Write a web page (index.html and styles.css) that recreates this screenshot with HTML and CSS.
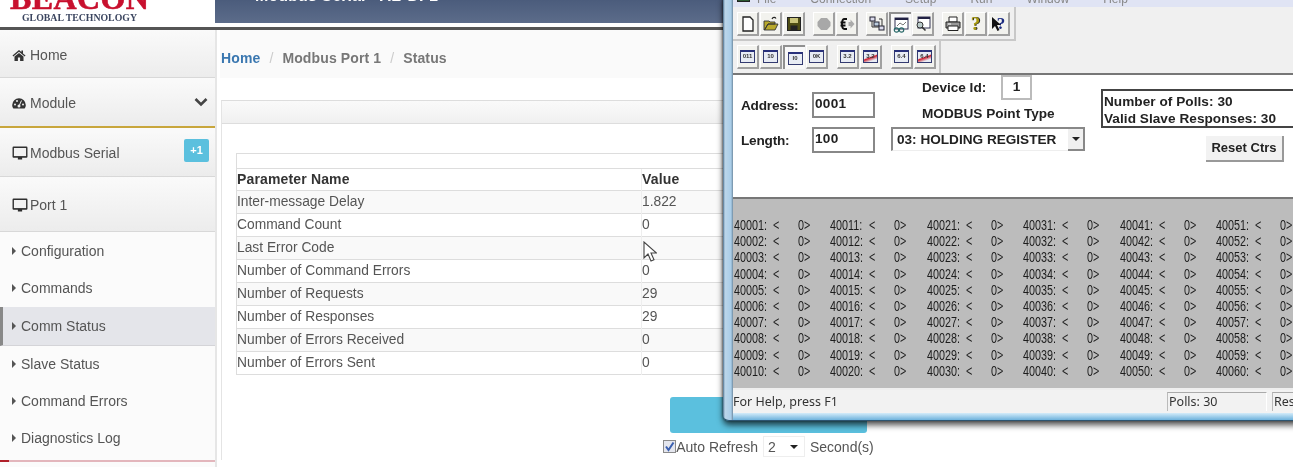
FILE: index.html
```html
<!DOCTYPE html>
<html lang="en">
<head>
<meta charset="utf-8">
<title>Modbus Port 1 Status</title>
<link rel="stylesheet" href="styles.css">
</head>
<body>
<div class="page">
  <header class="top">
    <div class="logo">
      <div class="logo-name">BEACON</div>
      <div class="logo-sub">GLOBAL TECHNOLOGY</div>
    </div>
    <div class="titlebar"><span>Modbus Serial - AB DF1</span></div>
  </header>
  <div class="layout">
    <nav class="side">
      <div class="nav nav-home"><svg class="ico" viewBox="0 0 14 14"><path d="M7 2 0.5 7.6l.8.9L7 3.7l5.7 4.8.8-.9L11 5.500V2.600H9.400v1.500zM2.500 8.600V13h3.400V9.500h2.200V13h3.400V8.600L7 4.900z" fill="#333"/></svg>Home</div>
      <div class="nav nav-mod"><svg class="ico" viewBox="0 0 14 14"><path d="M7 2.200a6.800 6.800 0 0 0-6.800 6.800c0 1.500.5 2.700 1.200 3.500h11.200c.7-.8 1.200-2 1.200-3.500A6.800 6.800 0 0 0 7 2.200z" fill="#333"/><circle cx="3" cy="8.500" r="1" fill="#eee"/><circle cx="5" cy="5" r="1" fill="#eee"/><circle cx="11" cy="8.500" r="1" fill="#eee"/><path d="M9.500 4.500 7.500 9" stroke="#eee" stroke-width="1"/><circle cx="7" cy="10" r="1.500" fill="#eee"/></svg>Module<svg class="chev" viewBox="0 0 14 10"><path d="M1.500 2 7 7.500 12.500 2" fill="none" stroke="#444" stroke-width="2.600"/></svg></div>
      <div class="nav nav-serial"><svg class="ico ico-mon" viewBox="0 0 15 14"><path d="M1.500 1h12a1 1 0 0 1 1 1v8.500a1 1 0 0 1-1 1h-4V13h-4v-1.500h-4a1 1 0 0 1-1-1V2a1 1 0 0 1 1-1z" fill="#2e2e2e"/><rect x="1.800" y="2.300" width="11.400" height="7.600" fill="#f2f2f2"/></svg>Modbus Serial<span class="badge">+1</span></div>
      <div class="nav nav-port"><svg class="ico ico-mon" viewBox="0 0 15 14"><path d="M1.500 1h12a1 1 0 0 1 1 1v8.500a1 1 0 0 1-1 1h-4V13h-4v-1.500h-4a1 1 0 0 1-1-1V2a1 1 0 0 1 1-1z" fill="#2e2e2e"/><rect x="1.800" y="2.300" width="11.400" height="7.600" fill="#f2f2f2"/></svg>Port 1</div>
      <ul class="sub">
        <li class="sub-item"><i class="caret"></i>Configuration</li>
        <li class="sub-item"><i class="caret"></i>Commands</li>
        <li class="sub-item active"><i class="caret"></i>Comm Status</li>
        <li class="sub-item"><i class="caret"></i>Slave Status</li>
        <li class="sub-item"><i class="caret"></i>Command Errors</li>
        <li class="sub-item"><i class="caret"></i>Diagnostics Log</li>
      </ul>
      <div class="side-end"></div>
    </nav>
    <main class="main">
      <div class="crumbs"><a class="crumb-link">Home</a><span class="sep">/</span><span>Modbus Port 1</span><span class="sep">/</span><span>Status</span></div>
      <section class="panel">
        <div class="panel-head"></div>
        <div class="panel-body">
          <table class="params">
            <colgroup><col class="col-name"><col></colgroup>
            <tr class="cap"><td colspan="2"></td></tr>
            <tr class="head"><th>Parameter Name</th><th>Value</th></tr>
            <tr class="odd"><td>Inter-message Delay</td><td>1.822</td></tr>
            <tr><td>Command Count</td><td>0</td></tr>
            <tr class="odd"><td>Last Error Code</td><td></td></tr>
            <tr><td>Number of Command Errors</td><td>0</td></tr>
            <tr class="odd"><td>Number of Requests</td><td>29</td></tr>
            <tr><td>Number of Responses</td><td>29</td></tr>
            <tr class="odd"><td>Number of Errors Received</td><td>0</td></tr>
            <tr><td>Number of Errors Sent</td><td>0</td></tr>
          </table>
          <div class="actions">
            <div class="refresh-btn"></div>
            <div class="auto">
              <svg class="check" viewBox="0 0 13 13"><rect x=".5" y=".5" width="12" height="12" fill="#e4e6ee" stroke="#8a8a8a"/><path d="M3 6.500 5.500 10 10.500 2.500" fill="none" stroke="#3a5fb0" stroke-width="2"/></svg>
              <span>Auto Refresh</span>
              <span class="sel"><span>2</span><i class="sel-arrow"></i></span>
              <span>Second(s)</span>
            </div>
          </div>
        </div>
      </section>
    </main>
  </div>

  <svg class="cursor" viewBox="0 0 14 22"><path d="M1 1v16l4-4 3 7 3-1.300-3-6.700h5.500z" fill="#fff" stroke="#444" stroke-width="1.100"/></svg>

  <div class="win">
    <div class="win-in">
      <div class="menu">
        <span class="app-ico"></span>
        <span>File</span><span>Connection</span><span>Setup</span><span>Run</span><span>Window</span><span>Help</span>
      </div>
      <div class="tb tb1">
        <div class="tb-box">
          <div class="grp">
            <span class="btn"><svg viewBox="0 0 16 16"><path d="M3 1h7l3 3v11H3z" fill="#fff" stroke="#222" stroke-width="1.300"/></svg></span>
            <span class="btn"><svg viewBox="0 0 16 16"><path d="M1 14V5h5l1 1h5v2H5L1.500 14zM1.500 14h10.500l3-6H5z" fill="#b9a92c" stroke="#333" stroke-width=".9"/><path d="M9 3c1-2 3-2 4-.5" fill="none" stroke="#222" stroke-width="1.200"/></svg></span>
            <span class="btn"><svg viewBox="0 0 16 16"><rect x="1.500" y="1.500" width="13" height="13" fill="#4e4d14" stroke="#222"/><rect x="4" y="2" width="8" height="5" fill="#c9c47a"/><rect x="4.500" y="9.500" width="7" height="5" fill="#222"/></svg></span>
          </div>
          <div class="grp">
            <span class="btn"><svg viewBox="0 0 16 16"><path d="M5 2h6l3.500 4v4L11 14H5l-3.500-4V6z" fill="#a8a8a8"/></svg></span>
            <span class="btn"><svg viewBox="0 0 16 16"><path d="M8 3H5.500Q3 3 3 8t2.500 5H8M1.500 6.500H6.500M1.500 9.500H6.500" fill="none" stroke="#111" stroke-width="1.900"/><path d="M9.500 6h2V3.500L15.500 8l-4 4.500V10h-2z" fill="#aaa"/></svg></span>
          </div>
          <div class="grp">
            <span class="btn"><svg viewBox="0 0 16 16"><rect x="1" y="1" width="5" height="4" fill="#dde" stroke="#223"/><rect x="5" y="6" width="5" height="4" fill="#bcd" stroke="#223"/><rect x="10" y="10" width="5" height="4" fill="#dde" stroke="#223"/><path d="M3 5v6h7M10 3h3v7" fill="none" stroke="#333"/></svg></span>
            <span class="btn pressed"><svg viewBox="0 0 16 16"><rect x="2" y="1" width="13" height="11" fill="#fff" stroke="#335"/><rect x="2" y="1" width="13" height="2" fill="#224"/><path d="M4 9 7 6l3 2 3-3" fill="none" stroke="#777"/><circle cx="3.500" cy="13" r="2.200" fill="none" stroke="#2a6a6a" stroke-width="1.200"/><circle cx="8.500" cy="13" r="2.200" fill="none" stroke="#2a6a6a" stroke-width="1.200"/></svg></span>
            <span class="btn"><svg viewBox="0 0 16 16"><rect x="3" y="1" width="12" height="11" fill="#fff" stroke="#335"/><rect x="3" y="1" width="12" height="2" fill="#224"/><circle cx="5" cy="9" r="3" fill="#bcc" stroke="#333"/><path d="M7 11l3.500 3.500" stroke="#333" stroke-width="1.600"/></svg></span>
          </div>
          <div class="grp">
            <span class="btn"><svg viewBox="0 0 16 16"><path d="M4 1h8v5H4z" fill="#fff" stroke="#222"/><path d="M1 6h14v6H1z" fill="#999" stroke="#222"/><path d="M3 10h10v4.500H3z" fill="#fff" stroke="#222"/><path d="M3 8h3" stroke="#fff"/></svg></span>
            <span class="btn"><span class="q q-y">?</span></span>
            <span class="btn"><svg class="ptr" viewBox="0 0 9 14"><path d="M0 0v12l3-3 2.500 5 2-1-2.500-5H9z" fill="#111"/></svg><span class="q q-n">?</span></span>
          </div>
        </div>
      </div>
      <div class="tb tb2">
        <div class="tb-box2">
          <div class="grp">
            <span class="btn"><span class="mini">011</span></span>
            <span class="btn"><span class="mini">10</span></span>
            <span class="btn pressed"><span class="mini">I0</span></span>
            <span class="btn"><span class="mini">0K</span></span>
          </div>
          <div class="grp">
            <span class="btn"><span class="mini">3.2</span></span>
            <span class="btn"><span class="mini mini-red">3.2</span></span>
          </div>
          <div class="grp">
            <span class="btn"><span class="mini">6.4</span></span>
            <span class="btn"><span class="mini mini-red">6.4</span></span>
          </div>
        </div>
      </div>
      <div class="form">
        <div class="f-left">
          <div class="f-row"><label class="f-label">Address:</label><span class="f-input">0001</span></div>
          <div class="f-row"><label class="f-label">Length:</label><span class="f-input">100</span></div>
        </div>
        <div class="f-mid">
          <div class="dev"><label class="dev-label">Device Id:</label><span class="dev-input">1</span></div>
          <div class="pt-label">MODBUS Point Type</div>
          <div class="combo"><span>03: HOLDING REGISTER</span><span class="combo-btn"><i class="sel-arrow"></i></span></div>
        </div>
        <div class="f-right">
          <div class="counts"><div>Number of Polls: 30</div><div>Valid Slave Responses: 30</div></div>
          <div class="reset">Reset Ctrs</div>
        </div>
      </div>
      <div class="regs">
        <div class="reg"><span>40001:</span><span>&lt;</span><span>0&gt;</span></div>
        <div class="reg"><span>40002:</span><span>&lt;</span><span>0&gt;</span></div>
        <div class="reg"><span>40003:</span><span>&lt;</span><span>0&gt;</span></div>
        <div class="reg"><span>40004:</span><span>&lt;</span><span>0&gt;</span></div>
        <div class="reg"><span>40005:</span><span>&lt;</span><span>0&gt;</span></div>
        <div class="reg"><span>40006:</span><span>&lt;</span><span>0&gt;</span></div>
        <div class="reg"><span>40007:</span><span>&lt;</span><span>0&gt;</span></div>
        <div class="reg"><span>40008:</span><span>&lt;</span><span>0&gt;</span></div>
        <div class="reg"><span>40009:</span><span>&lt;</span><span>0&gt;</span></div>
        <div class="reg"><span>40010:</span><span>&lt;</span><span>0&gt;</span></div>
        <div class="reg"><span>40011:</span><span>&lt;</span><span>0&gt;</span></div>
        <div class="reg"><span>40012:</span><span>&lt;</span><span>0&gt;</span></div>
        <div class="reg"><span>40013:</span><span>&lt;</span><span>0&gt;</span></div>
        <div class="reg"><span>40014:</span><span>&lt;</span><span>0&gt;</span></div>
        <div class="reg"><span>40015:</span><span>&lt;</span><span>0&gt;</span></div>
        <div class="reg"><span>40016:</span><span>&lt;</span><span>0&gt;</span></div>
        <div class="reg"><span>40017:</span><span>&lt;</span><span>0&gt;</span></div>
        <div class="reg"><span>40018:</span><span>&lt;</span><span>0&gt;</span></div>
        <div class="reg"><span>40019:</span><span>&lt;</span><span>0&gt;</span></div>
        <div class="reg"><span>40020:</span><span>&lt;</span><span>0&gt;</span></div>
        <div class="reg"><span>40021:</span><span>&lt;</span><span>0&gt;</span></div>
        <div class="reg"><span>40022:</span><span>&lt;</span><span>0&gt;</span></div>
        <div class="reg"><span>40023:</span><span>&lt;</span><span>0&gt;</span></div>
        <div class="reg"><span>40024:</span><span>&lt;</span><span>0&gt;</span></div>
        <div class="reg"><span>40025:</span><span>&lt;</span><span>0&gt;</span></div>
        <div class="reg"><span>40026:</span><span>&lt;</span><span>0&gt;</span></div>
        <div class="reg"><span>40027:</span><span>&lt;</span><span>0&gt;</span></div>
        <div class="reg"><span>40028:</span><span>&lt;</span><span>0&gt;</span></div>
        <div class="reg"><span>40029:</span><span>&lt;</span><span>0&gt;</span></div>
        <div class="reg"><span>40030:</span><span>&lt;</span><span>0&gt;</span></div>
        <div class="reg"><span>40031:</span><span>&lt;</span><span>0&gt;</span></div>
        <div class="reg"><span>40032:</span><span>&lt;</span><span>0&gt;</span></div>
        <div class="reg"><span>40033:</span><span>&lt;</span><span>0&gt;</span></div>
        <div class="reg"><span>40034:</span><span>&lt;</span><span>0&gt;</span></div>
        <div class="reg"><span>40035:</span><span>&lt;</span><span>0&gt;</span></div>
        <div class="reg"><span>40036:</span><span>&lt;</span><span>0&gt;</span></div>
        <div class="reg"><span>40037:</span><span>&lt;</span><span>0&gt;</span></div>
        <div class="reg"><span>40038:</span><span>&lt;</span><span>0&gt;</span></div>
        <div class="reg"><span>40039:</span><span>&lt;</span><span>0&gt;</span></div>
        <div class="reg"><span>40040:</span><span>&lt;</span><span>0&gt;</span></div>
        <div class="reg"><span>40041:</span><span>&lt;</span><span>0&gt;</span></div>
        <div class="reg"><span>40042:</span><span>&lt;</span><span>0&gt;</span></div>
        <div class="reg"><span>40043:</span><span>&lt;</span><span>0&gt;</span></div>
        <div class="reg"><span>40044:</span><span>&lt;</span><span>0&gt;</span></div>
        <div class="reg"><span>40045:</span><span>&lt;</span><span>0&gt;</span></div>
        <div class="reg"><span>40046:</span><span>&lt;</span><span>0&gt;</span></div>
        <div class="reg"><span>40047:</span><span>&lt;</span><span>0&gt;</span></div>
        <div class="reg"><span>40048:</span><span>&lt;</span><span>0&gt;</span></div>
        <div class="reg"><span>40049:</span><span>&lt;</span><span>0&gt;</span></div>
        <div class="reg"><span>40050:</span><span>&lt;</span><span>0&gt;</span></div>
        <div class="reg"><span>40051:</span><span>&lt;</span><span>0&gt;</span></div>
        <div class="reg"><span>40052:</span><span>&lt;</span><span>0&gt;</span></div>
        <div class="reg"><span>40053:</span><span>&lt;</span><span>0&gt;</span></div>
        <div class="reg"><span>40054:</span><span>&lt;</span><span>0&gt;</span></div>
        <div class="reg"><span>40055:</span><span>&lt;</span><span>0&gt;</span></div>
        <div class="reg"><span>40056:</span><span>&lt;</span><span>0&gt;</span></div>
        <div class="reg"><span>40057:</span><span>&lt;</span><span>0&gt;</span></div>
        <div class="reg"><span>40058:</span><span>&lt;</span><span>0&gt;</span></div>
        <div class="reg"><span>40059:</span><span>&lt;</span><span>0&gt;</span></div>
        <div class="reg"><span>40060:</span><span>&lt;</span><span>0&gt;</span></div>
      </div>
      <div class="status">
        <span class="st-help">For Help, press F1</span>
        <span class="st-cell st-polls">Polls: 30</span>
        <span class="st-cell st-res">Resets: 0</span>
      </div>
    </div>
  </div>
</div>
</body>
</html>
```
FILE: styles.css
```css
* { box-sizing: border-box; }
html, body { margin: 0; padding: 0; background: #fff; }
body { font-family: "Liberation Sans", Arial, sans-serif; color: #555; overflow: hidden; }

.page {
  position: relative;
  width: 1293px;
  height: 467px;
  overflow: hidden;
  background: #fff;
  filter: blur(.35px);
}

/* header */
.top {
  display: flex;
  height: 30px;
  border-bottom: 3px solid #555;
}
.logo { width: 215px; height: 27px; overflow: hidden; padding-left: 10px; }
.logo-name {
  font: bold 32px/19px "Liberation Serif", serif;
  color: #c8102e;
  height: 8px;
  display: flex;
  align-items: flex-end;
  letter-spacing: .4px;
  -webkit-text-stroke: .6px #c8102e;
}
.logo-sub {
  font: bold 9.8px/12px "Liberation Serif", serif;
  color: #3c4660;
  margin: 4px 0 0 12px;
  white-space: nowrap;
}
.titlebar {
  flex: 1;
  height: 23px;
  background: linear-gradient(#4b5c7c, #5c6c8a);
  overflow: hidden;
  color: #fff;
  font: bold 16px/16px "Liberation Sans", sans-serif;
  padding-left: 40px;
}
.titlebar span { display: block; margin-top: -12px; white-space: nowrap; letter-spacing: .1px; }

/* layout */
.layout { display: flex; height: 437px; }
.side {
  width: 217px;
  flex: none;
  background: #fbfbfb;
  border-right: 2px solid #e6e6e6;
  font-size: 14px;
  color: #555;
}
.nav {
  display: flex;
  align-items: center;
  padding-left: 12px;
  padding-top: 2px;
  background: linear-gradient(#fafafa, #ececec);
  border-bottom: 1px solid #d8d8d8;
}
.nav-home { height: 48px; }
.nav-mod { height: 50px; border-bottom: 2px solid #c8a63c; padding-right: 7px; }
.nav-serial { height: 49px; padding-right: 6px; }
.nav-port { height: 55px; }
.ico { width: 14px; height: 14px; margin-right: 4px; flex: none; }
.ico-mon { width: 16px; height: 16px; margin-right: 2px; }
.chev { width: 14px; height: 10px; margin-left: auto; margin-top: -2px; }
.badge {
  margin-left: auto;
  margin-top: -6px;
  width: 25px;
  height: 23px;
  background: #5bc0de;
  border-radius: 2px;
  color: #fff;
  font-size: 11px;
  font-weight: bold;
  text-align: center;
  line-height: 23px;
}
.sub { list-style: none; margin: 0; padding: 0; }
.sub-item {
  display: flex;
  align-items: center;
  height: 37.5px;
  padding-left: 12px;
}
.sub-item.active {
  height: 39px;
  background: #e4e5ea;
  border-left: 3px solid #888;
  border-bottom: 1px solid #d4d4d8;
  padding-left: 9px;
}
.active ~ .sub-item { height: 37px; padding-bottom: 2px; }
.caret {
  width: 0; height: 0;
  border-left: 4px solid #555;
  border-top: 4px solid transparent;
  border-bottom: 4px solid transparent;
  margin-right: 5px;
}
.side-end {
  height: 2px;
  margin-top: 3px;
  background: linear-gradient(90deg, #b0202a 9px, #e3b6bc 9px);
}

/* content */
.main { flex: 1; padding-left: 3px; min-width: 0; }
.crumbs {
  height: 48px;
  padding: 8px 0 0 1px;
  display: flex;
  align-items: center;
  gap: 9px;
  background: #fafafa;
  font-size: 14px;
  font-weight: bold;
  color: #777;
  letter-spacing: .12px;
}
.crumb-link { color: #3a77b0; }
.sep { color: #ccc; font-weight: normal; }
.panel {
  width: 1093px;
  margin: 22px 0 0 1px;
  border-top: 1px solid #ddd;
  border-left: 1px solid #e4e4e4;
  font-size: 13.8px;
}
.panel-head {
  height: 23px;
  background: linear-gradient(#fafafa, #f0f0f0);
  border-bottom: 1px solid #ddd;
}
.panel-body { padding: 29px 14px 0 14px; }
.params {
  width: 100%;
  border-collapse: collapse;
  border: 1px solid #ddd;
  table-layout: fixed;
}
.col-name { width: 405px; }
.params td, .params th {
  padding: 0 0 1px 0;
  height: 23px;
  border-top: 1px solid #ddd;
  text-align: left;
  font-weight: normal;
  color: #555;
  white-space: nowrap;
}
.params td + td, .params th + th { border-left: 1px solid #eee; }
.params th { font-weight: bold; color: #333; height: 22px; letter-spacing: .15px; font-size: 14px; }
.params .cap td { height: 15px; }
.params .odd td { background: #f9f9f9; }
.actions {
  display: flex;
  flex-direction: column;
  align-items: center;
  margin-top: 22px;
}
.refresh-btn {
  width: 197px;
  height: 36px;
  background: #5bc0de;
  border-radius: 3px;
}
.auto {
  display: flex;
  align-items: center;
  height: 27px;
  font-size: 14px;
  color: #555;
  padding-left: 1px;
}
.check { width: 13px; height: 13px; }
.sel {
  display: flex;
  align-items: center;
  justify-content: space-between;
  width: 42px;
  height: 21px;
  margin: 0 5px;
  padding: 0 6px 0 4px;
  border: 1px solid #eee;
}
.sel-arrow {
  width: 0; height: 0;
  border-top: 4px solid #222;
  border-left: 4px solid transparent;
  border-right: 4px solid transparent;
}

.cursor {
  position: absolute;
  left: 643px;
  top: 241px;
  width: 14px;
  height: 22px;
}

/* desktop window */
.win {
  position: absolute;
  left: 723px;
  top: -4px;
  width: 600px;
  height: 425px;
  padding: 0 0 7px 10px;
  background: linear-gradient(90deg, #4c6f8c 0, #bcd6ea 2px, #a9cde8 8px, #6f8aa0 10px);
  border-bottom-left-radius: 6px;
  border-bottom: 1px solid #2c5470;
  box-shadow: 0 4px 6px rgba(0,0,0,.7), -1px 0 2px rgba(0,0,0,.35);
}
.win::after {
  content: "";
  position: absolute;
  left: 10px; right: 0; bottom: 0;
  height: 7px;
  background: linear-gradient(#d4ecfa, #6eb2dc);
}
.win-in { display: flex; flex-direction: column; height: 100%; background: #f0f0f0; color: #222; }

.menu {
  height: 11px;
  flex: none;
  background: #e0e4f4;
  display: flex;
  gap: 34px;
  overflow: hidden;
  padding-left: 24px;
  font: 12px/6px "Liberation Sans", sans-serif;
  color: #888;
  position: relative;
}
.app-ico { position: absolute; left: 4px; top: 0; width: 13px; height: 6px; background: #2c5a30; border: 1px solid #222; }

.tb { display: flex; flex: none; background: #f0f0f0; }
.tb1 { height: 34px; }
.tb2 { height: 32px; }
.tb-box, .tb-box2 {
  display: flex;
  padding: 4px 0 0 4px;
  border-right: 2px solid #c8c8c8;
  border-bottom: 2px solid #c8c8c8;
}
.tb-box { width: 283px; gap: 8px; padding-top: 5px; }
.tb-box2 { width: 208px; gap: 9px; border-bottom: 0; }
.grp { display: flex; gap: 1px; }
.btn {
  position: relative;
  width: 22px;
  height: 24px;
  display: flex;
  align-items: center;
  justify-content: center;
  background: #f2f2ee;
  border-right: 2px solid #a0a0a0;
  border-bottom: 2px solid #a0a0a0;
  border-top: 1px solid #fff;
  border-left: 1px solid #fff;
}
.btn.pressed { border: 0; border-top: 2px solid #909090; border-left: 2px solid #909090; background: #f8f8f8; }
.btn svg { width: 16px; height: 16px; }
.q { font: bold 19px/20px "Liberation Serif", serif; }
.q-y { color: #a89a10; text-shadow: 1px 0 0 #222; }
.q-n { color: #1a2a80; margin-left: 5px; font-size: 17px; }
.btn svg.ptr { position: absolute; left: 3px; top: 4px; width: 9px; height: 14px; }
.mini {
  width: 15px;
  height: 13px;
  background: #e8ecf4;
  border: 1px solid #333a70;
  border-top: 2px solid #28307a;
  font: bold 6px/9px "Liberation Sans", sans-serif;
  color: #333;
  text-align: center;
  overflow: hidden;
}
.mini-red { background: linear-gradient(160deg, #e8ecf4 45%, #cc2030 55%, #e8ecf4 80%); }

/* form */
.form {
  flex: none;
  height: 126px;
  display: flex;
  padding-left: 8px;
  background: #fff;
  border-top: 2px solid #777;
  border-bottom: 2px solid #777;
  font: bold 13.6px/16px "Liberation Sans", sans-serif;
  color: #222;
}
.f-left { width: 134px; padding-top: 17px; display: flex; flex-direction: column; gap: 9px; }
.f-row { display: flex; align-items: center; height: 26px; }
.f-label { width: 71px; letter-spacing: -.2px; padding-top: 2px; }
.f-input {
  width: 63px;
  height: 26px;
  border: 2px solid #888;
  padding: 1px 0 0 1px;
  line-height: 18px;
  letter-spacing: .3px;
}
.f-mid { width: 194px; margin-left: 16px; }
.dev { display: flex; align-items: center; height: 25px; }
.dev-label { width: 110px; padding-left: 31px; }
.dev-input {
  width: 31px;
  height: 25px;
  border: 2px solid #bbb;
  text-align: center;
  line-height: 19px;
}
.pt-label { padding-left: 31px; height: 27px; line-height: 27px; white-space: nowrap; }
.combo {
  display: flex;
  align-items: center;
  justify-content: space-between;
  height: 24px;
  padding-left: 4px;
  border-left: 2px solid #888;
  border-top: 2px solid #888;
  border-bottom: 1px solid #eee;
  white-space: nowrap;
}
.combo-btn {
  width: 17px;
  height: 22px;
  flex: none;
  display: flex;
  align-items: center;
  justify-content: center;
  background: #f0f0f0;
  border-right: 2px solid #888;
  border-bottom: 2px solid #888;
}
.f-right { flex: 1; margin-left: 16px; padding-top: 14px; display: flex; flex-direction: column; align-items: flex-start; }
.counts {
  width: 220px;
  height: 39px;
  border: 2px solid #444;
  border-right: 0;
  padding: 2px 0 0 1px;
  white-space: nowrap;
  letter-spacing: .05px;
  line-height: 17px;
}
.reset {
  margin: 8px 0 0 105px;
  width: 78px;
  height: 26px;
  background: #f2f2f2;
  border-right: 2px solid #999;
  border-bottom: 2px solid #999;
  text-align: center;
  line-height: 24px;
  font-size: 13px;
}

/* registers */
.regs {
  flex: none;
  height: 191px;
  background: #bcbcbc;
  border-bottom: 2px solid #eee;
  padding: 18px 0 0 1px;
  display: grid;
  grid-auto-flow: column;
  grid-template-rows: repeat(10, 16.2px);
  grid-auto-columns: 96.4px;
  font: 15px/16px "Liberation Sans", sans-serif;
  color: #1c1c1c;
}
.reg {
  display: flex;
  width: 130px;
  white-space: nowrap;
  transform: scaleX(.72);
  transform-origin: left center;
}
.reg span:nth-child(1) { width: 54px; }
.reg span:nth-child(2) { width: 35px; }

/* status */
.status {
  flex: 1;
  display: flex;
  align-items: center;
  background: #f2f2f2;
  font: 12.5px/18px "Noto Sans", sans-serif;
  color: #333;
}
.st-help { width: 434px; flex: none; }
.st-cell {
  flex: none;
  height: 19px;
  border-top: 1px solid #aaa;
  border-left: 1px solid #bbb;
  border-right: 1px solid #fff;
  padding-left: 1px;
  white-space: nowrap;
  overflow: hidden;
}
.st-polls { width: 100px; margin-right: 5px; }
.st-res { width: 60px; }
```
